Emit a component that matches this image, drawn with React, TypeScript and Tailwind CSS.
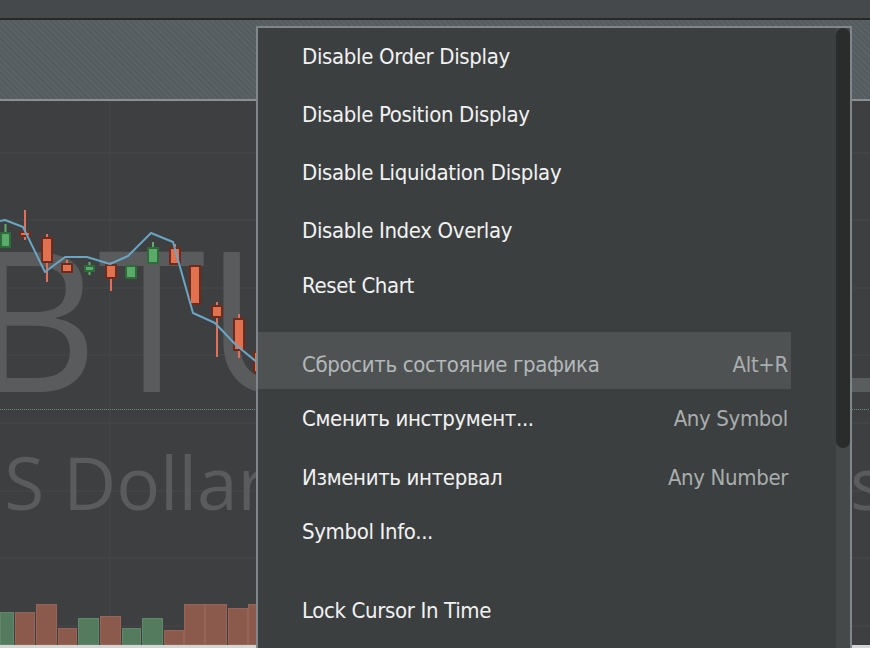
import React from "react";

type Item = { label?: string; shortcut?: string; cls: string; sep?: boolean };

const items: Item[] = [
  { label: "Disable Order Display", cls: "h-[58px]" },
  { label: "Disable Position Display", cls: "h-[58px]" },
  { label: "Disable Liquidation Display", cls: "h-[58px]" },
  { label: "Disable Index Overlay", cls: "h-[58px]" },
  { label: "Reset Chart", cls: "h-[52px]" },
  { sep: true, cls: "h-[20px]" },
  {
    label: "Сбросить состояние графика",
    shortcut: "Alt+R",
    cls: "h-[57px] pt-[9px] bg-[#4e5253] text-[#b4b8b9]",
  },
  { label: "Сменить инструмент...", shortcut: "Any Symbol", cls: "h-[60px]" },
  { label: "Изменить интервал", shortcut: "Any Number", cls: "h-[58px]" },
  { label: "Symbol Info...", cls: "h-[50px]" },
  { sep: true, cls: "h-[25px]" },
  { label: "Lock Cursor In Time", cls: "h-[58px]" },
];

const candles = [
  { x: 0, w: 11, t: 232, b: 248, wt: 224, wb: 248, g: true },
  { x: 19, w: 12, t: 231, b: 237, wt: 210, wb: 240, g: false },
  { x: 41, w: 12, t: 237, b: 263, wt: 234, wb: 282, g: false },
  { x: 61, w: 12, t: 263, b: 273, wt: 260, wb: 273, g: false },
  { x: 84, w: 11, t: 265, b: 272, wt: 262, wb: 275, g: true },
  { x: 105, w: 12, t: 264, b: 279, wt: 262, wb: 291, g: false },
  { x: 125, w: 12, t: 265, b: 279, wt: 265, wb: 279, g: true },
  { x: 147, w: 12, t: 247, b: 264, wt: 242, wb: 264, g: true },
  { x: 169, w: 12, t: 247, b: 265, wt: 244, wb: 265, g: false },
  { x: 189, w: 12, t: 265, b: 305, wt: 265, wb: 305, g: false },
  { x: 211, w: 12, t: 305, b: 318, wt: 302, wb: 357, g: false },
  { x: 233, w: 12, t: 318, b: 351, wt: 314, wb: 358, g: false },
  { x: 253, w: 12, t: 351, b: 373, wt: 351, wb: 373, g: false },
];

const volumes = [
  { x: 0, x1: 14, t: 612, g: true },
  { x: 15, x1: 35, t: 612, g: false },
  { x: 36, x1: 57, t: 604, g: false },
  { x: 58, x1: 77, t: 628, g: false },
  { x: 78, x1: 99, t: 618, g: true },
  { x: 100, x1: 121, t: 616, g: false },
  { x: 122, x1: 141, t: 628, g: true },
  { x: 142, x1: 163, t: 618, g: true },
  { x: 164, x1: 184, t: 630, g: false },
  { x: 184, x1: 205, t: 604, g: false },
  { x: 205, x1: 227, t: 604, g: false },
  { x: 228, x1: 248, t: 608, g: false },
  { x: 248, x1: 262, t: 604, g: false },
];

const linePts =
  "0,221 5,220 23,227 45,272 65,257 87,257 110,264 128,256 151,233 173,242 193,313 215,323 236,345 258,363";

const gridY = [153, 220, 288, 355, 423, 491, 558, 626];

function ChartBack() {
  return (
    <svg
      className="absolute inset-0"
      width={870}
      height={544}
      viewBox="0 101 870 544"
    >
      {gridY.map((y) => (
        <line key={y} x1={0} x2={870} y1={y} y2={y} stroke="#464849" strokeWidth={1} />
      ))}
      <line x1={110} x2={110} y1={101} y2={645} stroke="#444647" strokeWidth={1} />
    </svg>
  );
}

function ChartFront() {
  return (
    <svg
      className="absolute inset-0"
      width={870}
      height={544}
      viewBox="0 101 870 544"
    >
      <line
        x1={0}
        x2={870}
        y1={409.5}
        y2={409.5}
        stroke="#6a8f76"
        strokeWidth={1}
        strokeDasharray="1 1"
      />
      <rect x={852} y={378} width={18} height={14} fill="#5a5d5e" />
      {volumes.map((v, i) => (
        <rect
          key={i}
          x={v.x + 0.5}
          y={v.t + 0.5}
          width={v.x1 - v.x - 1}
          height={644 - v.t}
          fill={v.g ? "#557b5e" : "#8b5a4c"}
          stroke={v.g ? "#5f876a" : "#976455"}
          strokeWidth={1}
        />
      ))}
      {candles.map((c, i) => (
        <g key={i}>
          <line
            x1={c.x + c.w / 2}
            x2={c.x + c.w / 2}
            y1={c.wt}
            y2={c.wb}
            stroke={c.g ? "#5fae6e" : "#e0705a"}
            strokeWidth={2}
          />
          <rect
            x={c.x + 1}
            y={c.t + 1}
            width={c.w - 2}
            height={c.b - c.t - 2}
            fill={c.g ? "#5aab6a" : "#e2714f"}
            stroke={c.g ? "#2f6a3c" : "#6e2a1c"}
            strokeWidth={2}
          />
        </g>
      ))}
      <polyline points={linePts} fill="none" stroke="#6aa6c3" strokeWidth={2} strokeLinejoin="round" />
    </svg>
  );
}

function Menu() {
  return (
    <div className="absolute left-[256px] top-[26px] w-[596px] h-[640px] overflow-hidden border-2 border-[#80878a] bg-[#3c3f40] flex font-['DejaVu_Sans_Condensed','DejaVu_Sans',sans-serif] text-[22px] tracking-[-0.35px] leading-none">
      <div className="w-[533px] flex flex-col">
        {items.map((it, i) =>
          it.sep ? (
            <div key={i} className={`shrink-0 ${it.cls}`} />
          ) : (
            <div
              key={i}
              className={`flex items-center justify-between pl-[44px] pr-[3px] shrink-0 ${
                it.cls.includes("bg-") ? "" : "text-[#f2f2f2]"
              } ${it.cls}`}
            >
              <span>{it.label}</span>
              {it.shortcut && (
                <span className="text-[#a9adae]">{it.shortcut}</span>
              )}
            </div>
          )
        )}
      </div>
      <div className="flex-1" />
      <div className="w-[14px] bg-[#464949] flex flex-col">
        <div className="h-[420px] shrink-0 w-full rounded-full bg-[#2a2c2c]" />
      </div>
    </div>
  );
}

export default function App() {
  return (
    <div className="relative w-[870px] h-[648px] overflow-hidden bg-[#3d3f40] flex flex-col">
      <div className="h-[18px] bg-[#45494b] shrink-0" />
      <div className="h-[2px] bg-[#272929] shrink-0" />
      <div className="h-[79px] shrink-0 bg-[#586063] bg-[image:repeating-linear-gradient(45deg,#5a6265_0px,#5a6265_2px,#545c5f_2px,#545c5f_4px)]" />
      <div className="h-[2px] bg-[#8a9194] shrink-0" />
      <div className="relative flex-1 bg-[#3d3f40] overflow-hidden">
        <ChartBack />
        <div className="absolute left-[-142px] top-[117px] whitespace-nowrap font-['Open_Sans',sans-serif] text-[196px] leading-none text-[#595b5c]">
          XBTUSD
        </div>
        <div className="absolute left-[-49px] top-[344px] whitespace-nowrap font-['Open_Sans',sans-serif] text-[73px] leading-none text-[#595b5c]">
          US Dollar
        </div>
        <div className="absolute left-[850px] top-[344px] whitespace-nowrap font-['Open_Sans',sans-serif] text-[73px] leading-none text-[#595b5c]">
          s
        </div>
        <ChartFront />
      </div>
      <div className="h-[3px] bg-[#d4d6d6] shrink-0" />
      <Menu />
    </div>
  );
}
